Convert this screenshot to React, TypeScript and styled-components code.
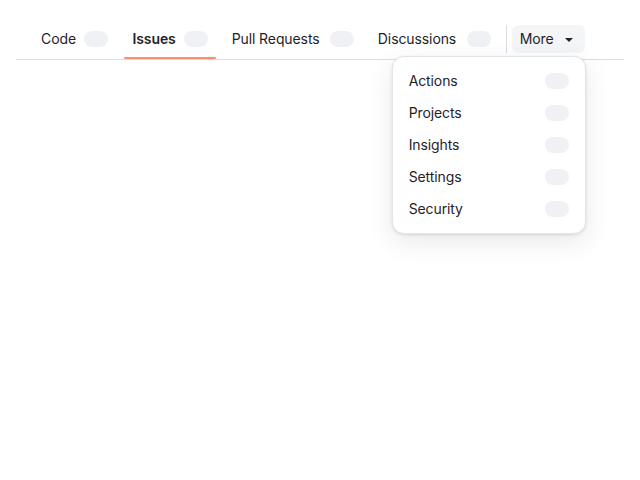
import React from "react";
import styled, { createGlobalStyle } from "styled-components";

const Global = createGlobalStyle`
  html, body { margin: 0; padding: 0; background: #ffffff; height: 100%; }
  #root { min-height: 100%; }
  body {
    font-family: Inter, "Noto Sans", "Liberation Sans", sans-serif;
    color: #1f2328;
    -webkit-font-smoothing: antialiased;
  }
`;

const Page = styled.div`
  min-height: 480px;
  box-sizing: border-box;
  padding: 20px 16px 0;
`;

const Nav = styled.nav`
  display: flex;
  align-items: stretch;
  height: 40px;
  box-sizing: border-box;
  padding-left: 17px;
  border-bottom: 1px solid #d8dee4;
`;

const TabList = styled.ul`
  display: flex;
  gap: 8px;
  margin: 0;
  padding: 0;
  list-style: none;
`;

const TabItem = styled.li`
  display: flex;
`;

const Tab = styled.a<{ $active?: boolean }>`
  position: relative;
  display: flex;
  align-items: center;
  gap: 8px;
  padding: 0 8px 2px;
  font-size: 14px;
  line-height: 20px;
  color: #1f2328;
  text-decoration: none;
  font-weight: ${(p) => (p.$active ? 600 : 400)};
  letter-spacing: -0.1px;
  cursor: pointer;

  &::after {
    content: "";
    position: absolute;
    left: 0;
    right: 0;
    bottom: 0;
    height: 2px;
    border-radius: 6px;
    background: ${(p) => (p.$active ? "#fd8c73" : "transparent")};
  }
`;

/* reserves the bold width so tabs do not shift when selected */
const TabText = styled.span`
  display: inline-flex;
  flex-direction: column;

  &::after {
    content: attr(data-content);
    height: 0;
    overflow: hidden;
    visibility: hidden;
    font-weight: 600;
    pointer-events: none;
  }
`;

const Counter = styled.span`
  display: inline-block;
  width: 24px;
  height: 16px;
  border-radius: 999px;
  background: #eff1f4;
`;

const MoreGroup = styled.div`
  display: flex;
  align-items: center;
  gap: 5px;
  margin-left: 7px;
  padding-bottom: 2px;
`;

const Divider = styled.span`
  width: 1px;
  height: 28px;
  background: #d8dee4;
`;

const MoreWrap = styled.div`
  position: relative;
`;

const MoreButton = styled.button`
  display: flex;
  align-items: center;
  gap: 7px;
  height: 28px;
  padding: 0 8px;
  border: none;
  border-radius: 6px;
  background: #f3f5f7;
  font-family: inherit;
  font-size: 14px;
  letter-spacing: -0.1px;
  color: #1f2328;
  cursor: pointer;
`;

const Menu = styled.ul`
  position: absolute;
  top: calc(100% + 3px);
  right: -1px;
  width: 194px;
  box-sizing: border-box;
  margin: 0;
  padding: 8px;
  list-style: none;
  background: #ffffff;
  border: 1px solid #e1e5ea;
  border-radius: 12px;
  box-shadow: 0 1px 3px rgba(31, 35, 40, 0.12), 0 8px 24px rgba(66, 74, 83, 0.12);
  z-index: 10;
`;

const MenuItem = styled.li`
  display: flex;
  align-items: center;
  justify-content: space-between;
  height: 32px;
  padding: 0 8px;
  border-radius: 6px;
  font-size: 14px;
  letter-spacing: -0.1px;
  color: #1f2328;
`;

const Caret = () => (
  <svg width="16" height="16" viewBox="0 0 16 16" fill="#1f2328" aria-hidden="true">
    <path d="m4.427 7.427 3.396 3.396a.25.25 0 0 0 .354 0l3.396-3.396A.25.25 0 0 0 11.396 7H4.604a.25.25 0 0 0-.177.427Z" />
  </svg>
);

const tabs = [
  { label: "Code" },
  { label: "Issues", active: true },
  { label: "Pull Requests" },
  { label: "Discussions" },
];

const menuItems = ["Actions", "Projects", "Insights", "Settings", "Security"];

export default function App() {
  return (
    <>
      <Global />
      <Page>
        <Nav>
          <TabList>
            {tabs.map((t) => (
              <TabItem key={t.label}>
                <Tab $active={t.active}>
                  <TabText data-content={t.label}>{t.label}</TabText>
                  <Counter />
                </Tab>
              </TabItem>
            ))}
          </TabList>
          <MoreGroup>
            <Divider />
            <MoreWrap>
              <MoreButton>
                More
                <Caret />
              </MoreButton>
              <Menu>
                {menuItems.map((m) => (
                  <MenuItem key={m}>
                    {m}
                    <Counter />
                  </MenuItem>
                ))}
              </Menu>
            </MoreWrap>
          </MoreGroup>
        </Nav>
      </Page>
    </>
  );
}
